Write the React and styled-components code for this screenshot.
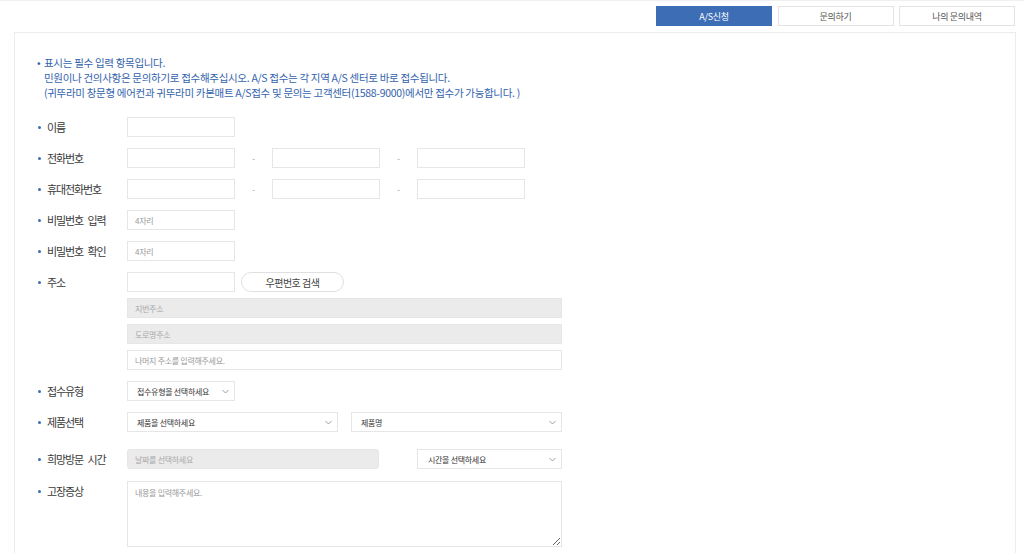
import React from 'react';
import styled, { createGlobalStyle } from 'styled-components';

const GlobalStyle = createGlobalStyle`
    html, body {
        margin: 0;
        padding: 0;
        background: #ffffff;
    }
    body {
        font-family: 'Noto Sans CJK KR', 'Noto Sans', sans-serif;
        color: #444;
    }
    * {
        box-sizing: border-box;
    }
`;

const Page = styled.div`
    width: 1024px;
    height: 553px;
    overflow: hidden;
    border-top: 1px solid #f0f0f0;
`;

const TabBar = styled.div`
    display: flex;
    justify-content: flex-end;
    gap: 5.5px;
    padding: 5px 9px 0 0;
    height: 31px;
`;

const Tab = styled.div`
    width: 116px;
    height: 20px;
    display: flex;
    align-items: center;
    justify-content: center;
    font-size: 9px;
    letter-spacing: -0.3px;
    border: 1px solid ${p => (p.active ? '#3d6db5' : '#e3e3e3')};
    background: ${p => (p.active ? '#3d6db5' : '#fff')};
    color: ${p => (p.active ? '#fff' : '#555')};
`;

const Panel = styled.div`
    margin: 0 8px 0 14px;
    border: 1px solid #ececec;
    padding: 22px 22px 40px 22px;
    min-height: 600px;
`;

const Notice = styled.div`
    display: flex;
    font-size: 10.5px;
    line-height: 15px;
    letter-spacing: -0.3px;
    color: #3463ad;
`;

const NoticeBullet = styled.span`
    width: 7px;
    flex: none;
`;

const Form = styled.div`
    margin-top: 17px;
    display: flex;
    flex-direction: column;
`;

const Row = styled.div`
    display: flex;
    align-items: flex-start;
    margin-top: ${p => p.top ?? 11}px;
`;

const Label = styled.div`
    width: 90px;
    flex: none;
    height: 20px;
    display: flex;
    align-items: center;
    font-size: 11px;
    letter-spacing: -1.1px;
    word-spacing: 3px;
    color: #3a3a3a;
    white-space: pre;

    &::before {
        content: '';
        width: 3px;
        height: 3px;
        border-radius: 50%;
        background: #3d6db5;
        margin: 0 6px 0 1px;
    }
`;

const Fields = styled.div`
    display: flex;
    align-items: center;
`;

const Stack = styled.div`
    display: flex;
    flex-direction: column;
    gap: 6px;
`;

const Input = styled.input`
    width: ${p => p.w}px;
    height: 20px;
    border: 1px solid #e6e6e6;
    border-radius: ${p => (p.round ? 3 : 0)}px;
    background: ${p => (p.gray ? '#ebebeb' : '#fff')};
    padding: 0 7px;
    font-family: inherit;
    font-size: 8px;
    letter-spacing: -0.3px;
    outline: none;

    &::placeholder {
        color: ${p => (p.gray ? '#a8a8a8' : '#999')};
    }
`;

const Dash = styled.span`
    width: 37px;
    text-align: center;
    font-size: 9px;
    color: #aaa;
`;

const PillButton = styled.button`
    margin-left: 6px;
    width: 103px;
    height: 20px;
    border: 1px solid #e0e0e0;
    border-radius: 10px;
    background: #fff;
    font-family: inherit;
    font-size: 10px;
    letter-spacing: -0.5px;
    color: #444;
    padding: 0;
`;

const Select = styled.div`
    width: ${p => p.w}px;
    height: 20px;
    margin-left: ${p => p.gap ?? 0}px;
    border: 1px solid #e6e6e6;
    display: flex;
    align-items: center;
    justify-content: space-between;
    padding: 0 5px 0 ${p => p.pl ?? 9}px;
    font-size: 8px;
    letter-spacing: -0.3px;
    color: #333;
`;

const Chevron = styled.svg`
    width: 7px;
    height: 5px;
`;

const DateInput = styled(Input)`
    margin-right: 38px;
`;

const TextArea = styled.textarea`
    width: 435px;
    height: 66px;
    border: 1px solid #e6e6e6;
    padding: 5px 7px;
    font-family: inherit;
    font-size: 8px;
    letter-spacing: -0.3px;
    outline: none;
    display: block;

    &::placeholder {
        color: #999;
    }
`;

const SelectBox = ({ w, gap, pl, children }) => (
    <Select w={w} gap={gap} pl={pl}>
        <span>{children}</span>
        <Chevron viewBox="0 0 7 5">
            <path d="M0.5 1 L3.5 4 L6.5 1" fill="none" stroke="#888" strokeWidth="0.8" />
        </Chevron>
    </Select>
);

const App = () => {
    return (
        <Page>
            <GlobalStyle />
            <TabBar>
                <Tab active>A/S신청</Tab>
                <Tab>문의하기</Tab>
                <Tab>나의 문의내역</Tab>
            </TabBar>

            <Panel>
                <Notice>
                    <NoticeBullet>•</NoticeBullet>
                    <div>
                        표시는 필수 입력 항목입니다.
                        <br />
                        민원이나 건의사항은 문의하기로 접수해주십시오. A/S 접수는 각 지역 A/S 센터로 바로 접수됩니다.
                        <br />
                        (귀뚜라미 창문형 에어컨과 귀뚜라미 카본매트 A/S접수 및 문의는 고객센터(1588-9000)에서만 접수가 가능합니다. )
                    </div>
                </Notice>

                <Form>
                    <Row top={0}>
                        <Label>이름</Label>
                        <Input w={108} />
                    </Row>
                    <Row>
                        <Label>전화번호</Label>
                        <Fields>
                            <Input w={108} />
                            <Dash>-</Dash>
                            <Input w={108} />
                            <Dash>-</Dash>
                            <Input w={108} />
                        </Fields>
                    </Row>
                    <Row>
                        <Label>휴대전화번호</Label>
                        <Fields>
                            <Input w={108} />
                            <Dash>-</Dash>
                            <Input w={108} />
                            <Dash>-</Dash>
                            <Input w={108} />
                        </Fields>
                    </Row>
                    <Row>
                        <Label>비밀번호 입력</Label>
                        <Input w={108} placeholder="4자리" />
                    </Row>
                    <Row>
                        <Label>비밀번호 확인</Label>
                        <Input w={108} placeholder="4자리" />
                    </Row>
                    <Row>
                        <Label>주소</Label>
                        <Stack>
                            <Fields>
                                <Input w={108} />
                                <PillButton>우편번호 검색</PillButton>
                            </Fields>
                            <Input w={435} gray placeholder="지번주소" />
                            <Input w={435} gray placeholder="도로명주소" />
                            <Input w={435} placeholder="나머지 주소를 입력해주세요." />
                        </Stack>
                    </Row>
                    <Row>
                        <Label>접수유형</Label>
                        <SelectBox w={108}>접수유형을 선택하세요</SelectBox>
                    </Row>
                    <Row>
                        <Label>제품선택</Label>
                        <Fields>
                            <SelectBox w={211}>제품을 선택하세요</SelectBox>
                            <SelectBox w={211} gap={13}>제품명</SelectBox>
                        </Fields>
                    </Row>
                    <Row top={17}>
                        <Label>희망방문 시간</Label>
                        <Fields>
                            <DateInput w={252} gray round placeholder="날짜를 선택하세요" />
                            <SelectBox w={145} pl={10}>시간을 선택하세요</SelectBox>
                        </Fields>
                    </Row>
                    <Row top={12}>
                        <Label>고장증상</Label>
                        <TextArea placeholder="내용을 입력해주세요." />
                    </Row>
                </Form>
            </Panel>
        </Page>
    );
};

export default App;
